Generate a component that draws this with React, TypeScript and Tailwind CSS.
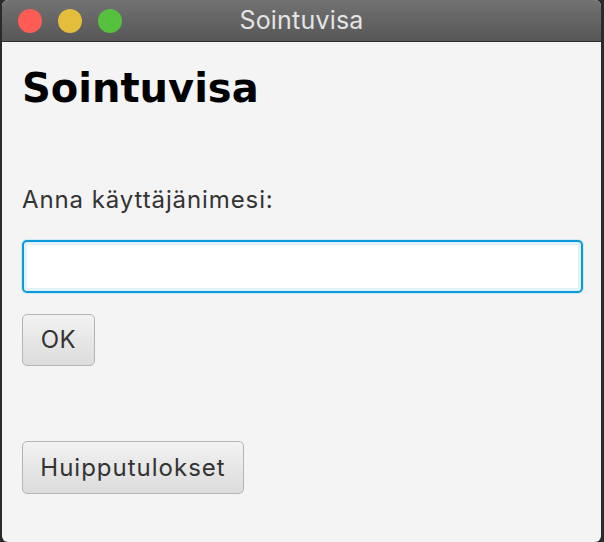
export default function App() {
  const sys = { fontFamily: 'Inter, "Liberation Sans", sans-serif' };
  return (
    <div className="w-[604px] h-[542px] bg-[#2a2a2a] flex">
      <div className="ml-[2px] w-[599px] h-[542px] bg-[#f4f4f4] rounded-[6px] overflow-hidden flex flex-col">
        {/* title bar */}
        <div className="relative h-[42px] shrink-0 bg-gradient-to-b from-[#727272] to-[#575757] border-b border-[#2c2c2c] flex items-center">
          <div className="flex gap-4 pl-4">
            <span className="w-6 h-6 rounded-full bg-[#fd5c56]" />
            <span className="w-6 h-6 rounded-full bg-[#e5bd3d]" />
            <span className="w-6 h-6 rounded-full bg-[#56c13e]" />
          </div>
          <div className="absolute inset-0 flex items-center justify-center text-[25px] tracking-[0.2px] text-[#e4e4e4]" style={sys}>
            Sointuvisa
          </div>
        </div>

        {/* content */}
        <div className="flex flex-col items-start pl-5 pr-[18px]">
          <h1 className="mt-[26px] text-[40px] leading-none font-bold text-black" style={{ fontFamily: '"DejaVu Sans", Verdana, sans-serif' }}>
            Sointuvisa
          </h1>
          <label className="mt-[80px] text-[24px] leading-none tracking-[0.9px] text-[#333]" style={sys}>
            Anna käyttäjänimesi:
          </label>
          <input
            className="mt-[28px] w-full h-[53px] bg-white border-2 border-[#0a9ad8] rounded-[5px] outline-none shadow-[0_0_0_1px_#cfe9f6,inset_0_0_0_3px_#e2f2fa]"
          />
          <button className="mt-[21px] w-[73px] h-[52px] rounded-[5px] border border-[#b4b4b4] bg-gradient-to-b from-[#f2f2f2] to-[#dcdcdc] text-[24px] tracking-[0.6px] text-[#333]" style={sys}>
            OK
          </button>
          <button className="mt-[75px] w-[222px] h-[53px] rounded-[5px] border border-[#b4b4b4] bg-gradient-to-b from-[#f2f2f2] to-[#dcdcdc] text-[24px] tracking-[1px] text-[#333]" style={sys}>
            Huipputulokset
          </button>
        </div>
      </div>
    </div>
  );
}
